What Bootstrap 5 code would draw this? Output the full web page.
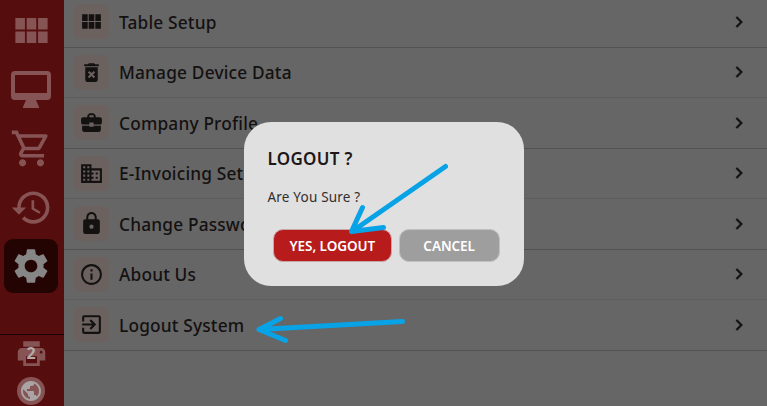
<!DOCTYPE html>
<html lang="en">
<head>
<meta charset="utf-8">
<meta name="viewport" content="width=device-width, initial-scale=1">
<title>Settings</title>
<link href="https://cdn.jsdelivr.net/npm/bootstrap@5.3.0/dist/css/bootstrap.min.css" rel="stylesheet">
<style>
body{height:406px;background:#666;color:#141111;font-family:"Noto Sans","Open Sans",sans-serif}
svg{display:block;fill:currentColor}
.side{width:64px;background:#560d0d;color:#865454;padding-top:.5px}
.side-item{height:59px;padding-right:2px}
.tile{width:54px;height:54px;border-radius:9px}
.tile.on{background:#240303;color:#868686}
.side-foot{margin-top:38px;border-top:1px solid #1c0404;height:72px}
.foot-item{height:37.5px;padding-right:2px}
.count{font-size:16px;font-weight:700;color:#b5aaaa;line-height:1;margin-left:-1px}
.globe{width:28px;height:28px;background:#865454;color:#aaa4a4}
.menu{margin-top:-3px}
.menu-row{height:50.5px;padding:0 17px 0 10px;border-bottom:1px solid #5d5d5d}
.menu-row:nth-child(odd){border-bottom-color:#525252}
.menu-icon{width:35px;height:35px;border-radius:6px;background:#6b6260}
.menu-text{margin-left:10px;margin-top:2px;font-size:17.3px;letter-spacing:.18px;font-weight:500;line-height:24px;white-space:nowrap}
.dialog{left:243.5px;top:121.5px;width:280px;height:164px;border-radius:27px;background:#e0e0e0;padding:25.5px 24px 0}
.dialog h1{font-size:17px;font-weight:650;line-height:24px;letter-spacing:.3px;margin:0 0 16px;color:#1e1818}
.dialog p{font-size:13.5px;line-height:20px;letter-spacing:.2px;margin:0 0 22px;color:#332e2e;font-weight:400}
.act{height:33px;border-radius:10px;border:1px solid #c9a5a5;padding:2px 0 0;font-size:13.5px;font-weight:600;letter-spacing:-.05px;color:#fff;white-space:nowrap;line-height:1}
.yes{width:119px;background:#b71b1b}
.no{width:101px;background:#9e9e9e;border-color:#c0c0c0}
.acts{gap:7px;margin-left:5.5px}
.marks{left:0;top:0;fill:none;stroke:#08a2e6;stroke-width:5;stroke-linecap:round;stroke-linejoin:round;pointer-events:none}
</style>
<script src="https://cdn.jsdelivr.net/npm/bootstrap@5.3.0/dist/js/bootstrap.bundle.min.js"></script>
</head>
<body class="m-0 overflow-hidden position-relative">
<svg width="0" height="0" class="position-absolute">
<symbol id="grid" viewBox="0 0 24 24"><path d="M14.67 5v6.5H9.33V5h5.34zm1 6.5H21V5h-5.33v6.5zm-1 7.5v-6.5H9.33V19h5.34zm1-6.5V19H21v-6.5h-5.33zm-7.34 0H3V19h5.33v-6.5zm0-1V5H3v6.5h5.33z"/></symbol>
<symbol id="chev" viewBox="0 0 24 24"><path d="M10 6 8.59 7.41 13.17 12l-4.58 4.59L10 18l6-6z" stroke="currentColor" stroke-width=".5"/></symbol>
</svg>
<div class="d-flex h-100">
<nav class="side flex-shrink-0">
<div class="side-item d-flex align-items-center justify-content-center"><svg width="43" height="43"><use href="#grid"/></svg></div>
<div class="side-item d-flex align-items-center justify-content-center"><svg width="40" height="37" viewBox="0 0 40 37"><path fill-rule="evenodd" d="M4 0h32a4 4 0 0 1 4 4v21a4 4 0 0 1-4 4H25l3 7v1H12v-1l3-7H4a4 4 0 0 1-4-4V4a4 4 0 0 1 4-4zm0 4v18h32V4z"/></svg></div>
<div class="side-item d-flex align-items-center justify-content-center"><svg width="43" height="43" viewBox="0 0 24 24"><path d="M15.55 13c.75 0 1.41-.41 1.75-1.03l3.58-6.49A.996.996 0 0 0 20.01 4H5.21l-.94-2H1v2h2l3.6 7.59-1.35 2.44C4.52 15.37 5.48 17 7 17h12v-2H7l1.1-2h7.45zM6.16 6h12.15l-2.76 5H8.53L6.16 6zM7 18c-1.1 0-1.99.9-1.99 2S5.9 22 7 22s2-.9 2-2-.9-2-2-2zm10 0c-1.1 0-1.99.9-1.99 2s.89 2 1.99 2 2-.9 2-2-.9-2-2-2z"/></svg></div>
<div class="side-item d-flex align-items-center justify-content-center"><svg width="43" height="43" viewBox="0 0 24 24"><path d="M13 3a9 9 0 0 0-9 9H1l3.89 3.89.07.14L9 12H6c0-3.87 3.13-7 7-7s7 3.13 7 7-3.13 7-7 7c-1.93 0-3.68-.79-4.94-2.06l-1.42 1.42A8.954 8.954 0 0 0 13 21a9 9 0 0 0 0-18zm-1 5v5l4.28 2.54.72-1.21-3.5-2.08V8H12z"/></svg></div>
<div class="side-item d-flex align-items-center justify-content-center"><div class="tile on d-flex align-items-center justify-content-center"><svg width="42" height="42" viewBox="0 0 24 24"><path d="M19.14 12.94c.04-.3.06-.61.06-.94 0-.32-.02-.64-.07-.94l2.03-1.58a.49.49 0 0 0 .12-.61l-1.92-3.32a.488.488 0 0 0-.59-.22l-2.39.96c-.5-.38-1.03-.7-1.62-.94l-.36-2.54a.484.484 0 0 0-.48-.41h-3.84c-.24 0-.43.17-.47.41l-.36 2.54c-.59.24-1.13.57-1.62.94l-2.39-.96c-.22-.08-.47 0-.59.22L2.74 8.87c-.12.21-.08.47.12.61l2.03 1.58c-.05.3-.09.63-.09.94s.02.64.07.94l-2.03 1.58a.49.49 0 0 0-.12.61l1.92 3.32c.12.22.37.29.59.22l2.39-.96c.5.38 1.03.7 1.62.94l.36 2.54c.05.24.24.41.48.41h3.84c.24 0 .44-.17.47-.41l.36-2.54c.59-.24 1.13-.56 1.62-.94l2.39.96c.22.08.47 0 .59-.22l1.92-3.32c.12-.22.07-.47-.12-.61l-2.01-1.58zM12 15.6c-1.98 0-3.6-1.62-3.6-3.6s1.62-3.6 3.6-3.6 3.6 1.62 3.6 3.6-1.62 3.6-3.6 3.6z"/></svg></div></div>
<div class="side-foot">
<div class="foot-item d-flex align-items-center justify-content-center position-relative"><svg width="33" height="33" viewBox="0 0 24 24"><path d="M19 8H5c-1.66 0-3 1.34-3 3v6h4v4h12v-4h4v-6c0-1.66-1.34-3-3-3zm-3 11H8v-5h8v5zm3-7c-.55 0-1-.45-1-1s.45-1 1-1 1 .45 1 1-.45 1-1 1zm-1-9H6v4h12V3z"/></svg><span class="count position-absolute top-50 start-50 translate-middle">2</span></div>
<div class="foot-item d-flex align-items-center justify-content-center"><div class="globe rounded-circle d-flex align-items-center justify-content-center"><svg width="24" height="24" viewBox="0 0 24 24"><path d="M12 2C6.48 2 2 6.48 2 12s4.48 10 10 10 10-4.48 10-10S17.52 2 12 2zm-1 17.93c-3.95-.49-7-3.85-7-7.93 0-.62.08-1.21.21-1.79L9 15v1c0 1.1.9 2 2 2v1.93zm6.9-2.54c-.26-.81-1-1.39-1.9-1.39h-1v-3c0-.55-.45-1-1-1H8v-2h2c.55 0 1-.45 1-1V7h2c1.1 0 2-.9 2-2v-.41c2.93 1.19 5 4.06 5 7.41 0 2.08-.8 3.97-2.1 5.39z"/></svg></div></div>
</div>
</nav>
<main class="flex-grow-1">
<div class="menu">
<div class="menu-row d-flex align-items-center"><span class="menu-icon d-flex align-items-center justify-content-center"><svg width="25" height="25"><use href="#grid"/></svg></span><span class="menu-text">Table Setup</span><svg class="ms-auto" width="22" height="22"><use href="#chev"/></svg></div>
<div class="menu-row d-flex align-items-center"><span class="menu-icon d-flex align-items-center justify-content-center"><svg width="25" height="25" viewBox="0 0 24 24"><path d="M6 19c0 1.1.9 2 2 2h8c1.1 0 2-.9 2-2V7H6v12zm2.46-7.12 1.41-1.41L12 12.59l2.12-2.12 1.41 1.41L13.41 14l2.12 2.12-1.41 1.41L12 15.41l-2.12 2.12-1.41-1.41L10.59 14l-2.13-2.12zM15.5 4l-1-1h-5l-1 1H5v2h14V4z"/></svg></span><span class="menu-text">Manage Device Data</span><svg class="ms-auto" width="22" height="22"><use href="#chev"/></svg></div>
<div class="menu-row d-flex align-items-center"><span class="menu-icon d-flex align-items-center justify-content-center"><svg width="25" height="25" viewBox="0 0 24 24"><path d="M10 16v-1H3.01L3 19c0 1.11.89 2 2 2h14c1.11 0 2-.89 2-2v-4h-7v1h-4zm10-9h-4.01V5l-2-2h-4l-2 2v2H4c-1.1 0-2 .9-2 2v3c0 1.11.89 2 2 2h6v-2h4v2h6c1.1 0 2-.9 2-2V9c0-1.1-.9-2-2-2zm-6 0h-4V5h4v2z"/></svg></span><span class="menu-text">Company Profile</span><svg class="ms-auto" width="22" height="22"><use href="#chev"/></svg></div>
<div class="menu-row d-flex align-items-center"><span class="menu-icon d-flex align-items-center justify-content-center"><svg width="25" height="25" viewBox="0 0 24 24"><path d="M12 7V3H2v18h20V7H12zM6 19H4v-2h2v2zm0-4H4v-2h2v2zm0-4H4V9h2v2zm0-4H4V5h2v2zm4 12H8v-2h2v2zm0-4H8v-2h2v2zm0-4H8V9h2v2zm0-4H8V5h2v2zm10 12h-8v-2h2v-2h-2v-2h2v-2h-2V9h8v10zm-2-8h-2v2h2v-2zm0 4h-2v2h2v-2z"/></svg></span><span class="menu-text">E-Invoicing Setup</span><svg class="ms-auto" width="22" height="22"><use href="#chev"/></svg></div>
<div class="menu-row d-flex align-items-center"><span class="menu-icon d-flex align-items-center justify-content-center"><svg width="25" height="25" viewBox="0 0 24 24"><path d="M18 8h-1V6c0-2.76-2.24-5-5-5S7 3.24 7 6v2H6c-1.1 0-2 .9-2 2v10c0 1.1.9 2 2 2h12c1.1 0 2-.9 2-2V10c0-1.1-.9-2-2-2zm-6 9c-1.1 0-2-.9-2-2s.9-2 2-2 2 .9 2 2-.9 2-2 2zm3.1-9H8.9V6c0-1.71 1.39-3.1 3.1-3.1s3.1 1.39 3.1 3.1v2z"/></svg></span><span class="menu-text">Change Password</span><svg class="ms-auto" width="22" height="22"><use href="#chev"/></svg></div>
<div class="menu-row d-flex align-items-center"><span class="menu-icon d-flex align-items-center justify-content-center"><svg width="25" height="25" viewBox="0 0 24 24"><path d="M11 7h2v2h-2zm0 4h2v6h-2zm1-9C6.48 2 2 6.48 2 12s4.48 10 10 10 10-4.48 10-10S17.52 2 12 2zm0 18c-4.41 0-8-3.59-8-8s3.59-8 8-8 8 3.59 8 8-3.59 8-8 8z"/></svg></span><span class="menu-text">About Us</span><svg class="ms-auto" width="22" height="22"><use href="#chev"/></svg></div>
<div class="menu-row d-flex align-items-center"><span class="menu-icon d-flex align-items-center justify-content-center"><svg width="25" height="25" viewBox="0 0 24 24"><path d="M10.09 15.59 11.5 17l5-5-5-5-1.41 1.41L12.67 11H3v2h9.67l-2.58 2.59zM19 3H5a2 2 0 0 0-2 2v4h2V5h14v14H5v-4H3v4a2 2 0 0 0 2 2h14c1.1 0 2-.9 2-2V5c0-1.1-.9-2-2-2z"/></svg></span><span class="menu-text">Logout System</span><svg class="ms-auto" width="22" height="22"><use href="#chev"/></svg></div>
</div>
</main>
</div>
<div class="dialog position-absolute" role="dialog">
<h1>LOGOUT ?</h1>
<p>Are You Sure ?</p>
<div class="acts d-flex"><button class="btn act yes">YES, LOGOUT</button><button class="btn act no">CANCEL</button></div>
</div>
<svg class="marks position-absolute" width="767" height="406"><path d="M445.5 166.5 352 231.5M362.5 207.5 351.5 231.5 383.5 227.5M402.5 321.500 259 329.5M280.5 318.5 259 329.5 285.5 340.5"/></svg>
</body>
</html>
